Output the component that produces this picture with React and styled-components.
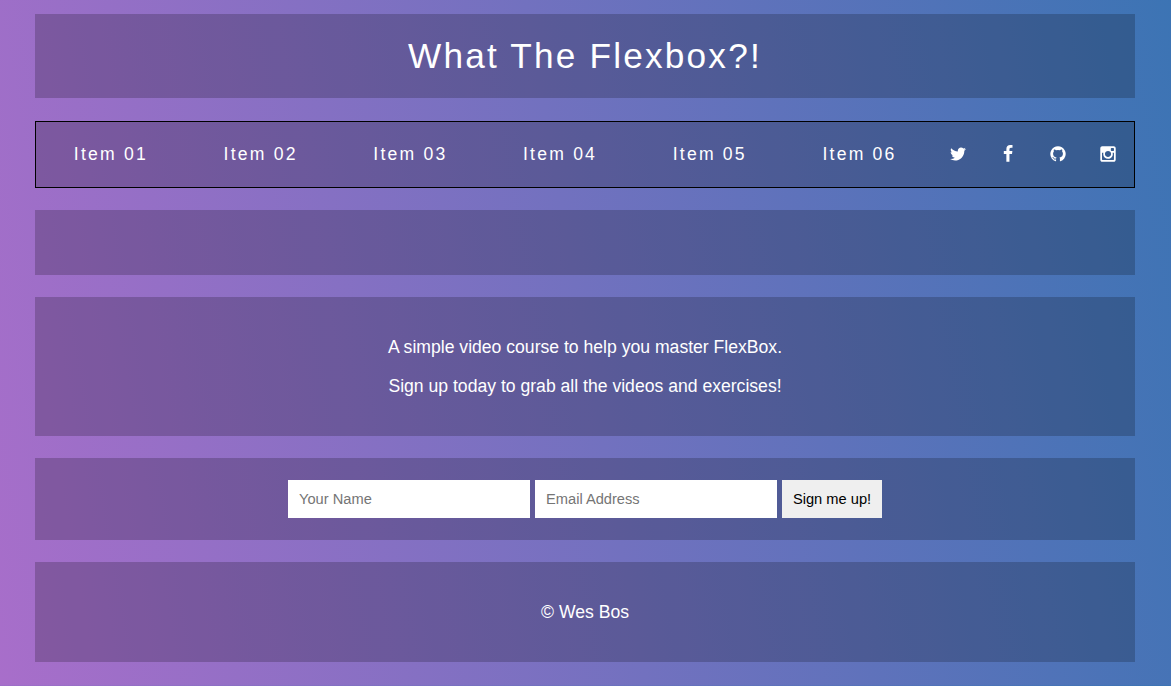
import React from "react";
import styled, { createGlobalStyle } from "styled-components";

const GlobalStyle = createGlobalStyle`
  *, *::before, *::after { box-sizing: border-box; }
  body {
    margin: 0;
    font-family: "Liberation Sans", Arial, sans-serif;
    font-size: 17.6px;
    line-height: 21px;
    color: white;
    background-image: linear-gradient(260deg, #3c74b4 0%, #a86eca 100%);
  }
`;

const Wrapper = styled.div`
  display: flex;
  flex-direction: column;
  gap: 22px;
  width: 1100px;
  margin-left: 35px;
  padding: 14px 0 22.6px;
`;

const Panel = styled.section`
  height: ${(p) => p.$height}px;
  padding: 22px;
  background: rgba(0, 0, 0, 0.2);
  text-align: center;
`;

const Title = styled.h1`
  height: 84px;
  margin: 0 0 1px;
  padding: 22px;
  background: rgba(0, 0, 0, 0.2);
  font-size: 35.2px;
  font-weight: 100;
  line-height: 40px;
  letter-spacing: 2.2px;
  text-align: center;
`;

const Nav = styled.nav`
  height: 67px;
  border: 1px solid black;
  background: rgba(0, 0, 0, 0.2);
`;

const Menu = styled.ul`
  display: flex;
  height: 100%;
  margin: 0;
  padding: 0;
  list-style: none;
`;

const MenuItem = styled.li`
  flex: ${(p) => (p.$social ? 1 : 3)} 1 0;
  min-width: 0;
`;

const MenuLink = styled.a`
  display: flex;
  align-items: center;
  justify-content: center;
  height: 100%;
  padding-bottom: 1px;
  color: white;
  font-weight: 100;
  letter-spacing: 2.2px;
  text-decoration: none;
  white-space: nowrap;
`;

const Glyph = styled.svg`
  width: 18px;
  height: 18px;
  margin-right: 1.8px;
  fill: currentColor;
`;

const Paragraph = styled.p`
  margin: 18px 0;
`;

const SignupForm = styled.form`
  display: flex;
  justify-content: center;
  gap: 5px;
`;

const Field = styled.input`
  width: 242px;
  height: 38px;
  padding: 11px;
  border: 0;
  border-radius: 0;
  font: 14.667px "Liberation Sans", Arial, sans-serif;
  &::placeholder { color: #757575; }
`;

const SubmitButton = styled.button`
  width: 100px;
  height: 38px;
  padding: 0;
  border: 0;
  background: #efefef;
  color: black;
  font: 14.667px "Liberation Sans", Arial, sans-serif;
  white-space: nowrap;
`;

const items = ["Item 01", "Item 02", "Item 03", "Item 04", "Item 05", "Item 06"];

const socials = [
  {
    name: "Twitter",
    path: "M1684 408q-67 98-162 167 1 14 1 42 0 130-38 259.5t-115.5 248.5-184.5 210.5-258 146-323 54.5q-271 0-496-145 35 4 78 4 225 0 401-138-105-2-188-64.5t-114-159.5q33 5 61 5 43 0 85-11-112-23-185.5-111.5t-73.5-205.5v-4q68 38 146 41-66-44-105-115t-39-154q0-88 44-163 121 149 294.5 238.5t371.5 99.5q-8-38-8-74 0-134 94.5-228.5t228.5-94.5q140 0 236 102 109-21 205-78-37 115-142 178 93-10 186-50z",
  },
  {
    name: "Facebook",
    path: "M1343 12v264h-157q-86 0-116 36t-30 108v189h293l-39 296h-254v759h-306v-759h-255v-296h255v-218q0-186 104-288.5t277-102.5q147 0 228 12z",
  },
  {
    name: "GitHub",
    path: "M896 128q209 0 385.5 103t279.5 279.5 103 385.5q0 251-146.5 451.5t-378.5 277.5q-27 5-40-7t-13-30q0-3 .5-76.5t.5-134.5q0-97-52-142 57-6 102.5-18t94-39 81-66.5 53-105 20.5-150.5q0-119-79-206 37-91-8-204-28-9-81 11t-92 44l-38 24q-93-26-192-26t-192 26q-16-11-42.5-27t-83.5-38.5-85-13.5q-45 113-8 204-79 87-79 206 0 85 20.5 150t52.5 105 80.5 67 94 39 102.5 18q-39 36-49 103-21 10-45 15t-57 5-65.5-21.5-55.5-62.5q-19-32-48.5-52t-49.5-24l-20-3q-21 0-29 4.5t-5 11.5 9 14 13 12l7 5q22 10 43.5 38t31.5 51l10 23q13 38 44 61.5t67 30 69.5 7 55.5-3.5l23-4q0 38 .5 88.5t.5 54.5q0 18-13 30t-40 7q-232-77-378.5-277.5t-146.5-451.5q0-209 103-385.5t279.5-279.5 385.5-103z",
  },
  {
    name: "Instagram",
    path: "M1490 1426v-648h-135q20 63 20 131 0 126-64 232.5t-174 168.5-240 62q-197 0-337-135.5t-140-327.5q0-68 20-131h-141v648q0 26 17.5 43.5t43.5 17.5h1069q25 0 43-17.5t18-43.5zm-284-533q0-124-90.5-211.5t-218.5-87.5q-127 0-217.5 87.5t-90.5 211.5 90.5 211.5 217.5 87.5q128 0 218.5-87.5t90.5-211.5zm284-360v-165q0-28-20-48.5t-49-20.5h-174q-29 0-49 20.5t-20 48.5v165q0 29 20 49t49 20h174q29 0 49-20t20-49zm174-208v1142q0 81-58 139t-139 58h-1142q-81 0-139-58t-58-139v-1142q0-81 58-139t139-58h1142q81 0 139 58t58 139z",
  },
];

export default function App() {
  return (
    <>
      <GlobalStyle />
      <Wrapper>
        <Title>What The Flexbox?!</Title>
        <Nav>
          <Menu>
            {items.map((label) => (
              <MenuItem key={label}>
                <MenuLink href="#">{label}</MenuLink>
              </MenuItem>
            ))}
            {socials.map(({ name, path }) => (
              <MenuItem key={name} $social>
                <MenuLink href="#" aria-label={name}>
                  <Glyph viewBox="0 0 1792 1792">
                    <path d={path} />
                  </Glyph>
                </MenuLink>
              </MenuItem>
            ))}
          </Menu>
        </Nav>
        <Panel $height={65} />
        <Panel $height={139}>
          <Paragraph>A simple video course to help you master FlexBox.</Paragraph>
          <Paragraph>Sign up today to grab all the videos and exercises!</Paragraph>
        </Panel>
        <Panel $height={82}>
          <SignupForm>
            <Field type="text" placeholder="Your Name" />
            <Field type="email" placeholder="Email Address" />
            <SubmitButton type="button">Sign me up!</SubmitButton>
          </SignupForm>
        </Panel>
        <Panel as="footer" $height={100}>
          <Paragraph>© Wes Bos</Paragraph>
        </Panel>
      </Wrapper>
    </>
  );
}
